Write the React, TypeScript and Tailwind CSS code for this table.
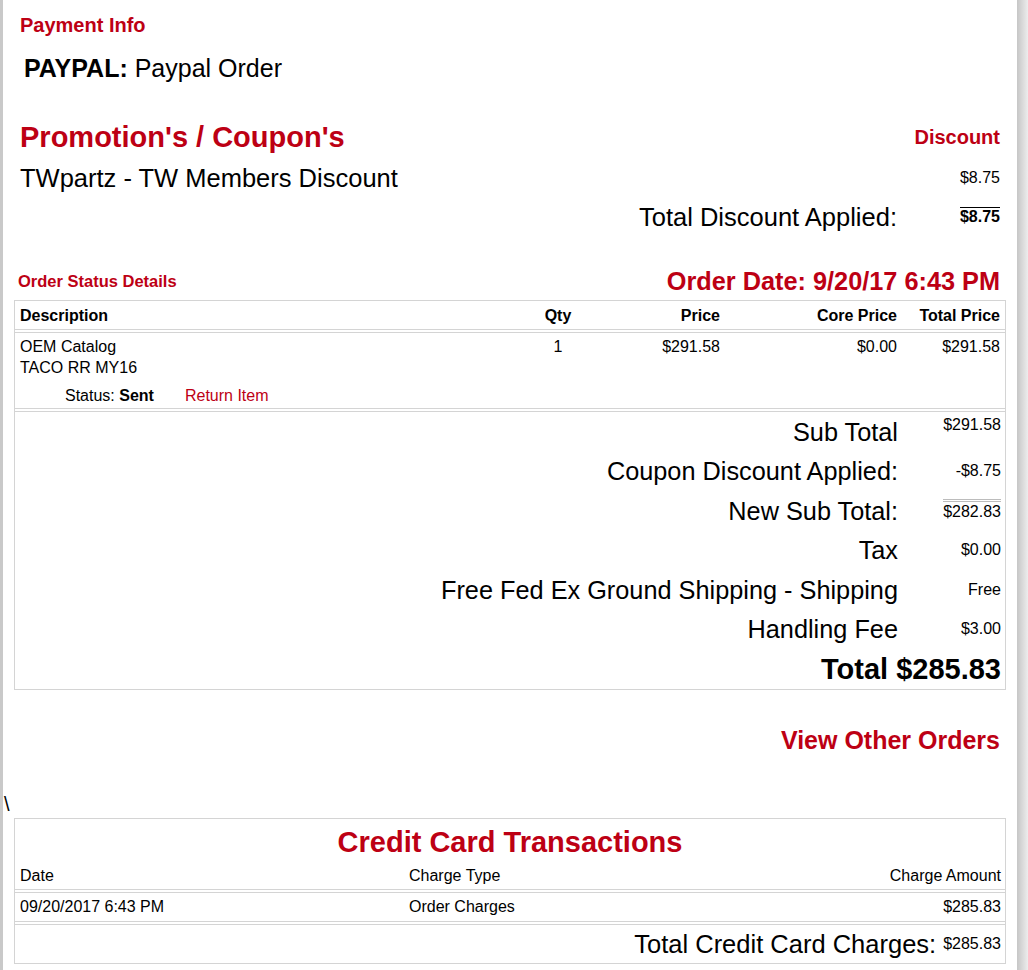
import React from 'react';

const red = 'text-[#bd0014]';

const totals: { label: string; value: string; top?: boolean; dbl?: boolean }[] = [
    { label: 'Sub Total', value: '$291.58', top: true },
    { label: 'Coupon Discount Applied:', value: '-$8.75' },
    { label: 'New Sub Total:', value: '$282.83', dbl: true },
    { label: 'Tax', value: '$0.00' },
    { label: 'Free Fed Ex Ground Shipping - Shipping', value: 'Free' },
    { label: 'Handling Fee', value: '$3.00' },
];

export default function App() {
    return (
        <div className="flex min-h-[970px] bg-white font-['Liberation_Sans',Arial,Helvetica,sans-serif] text-black">
            <div className="w-[3px] shrink-0 bg-[#c9c9c9]" />
            <main className="w-[1014px] shrink-0">
                {/* payment */}
                <div className={`pl-[17px] pt-[13px] text-[20px] leading-[24px] font-bold ${red}`}>Payment Info</div>
                <div className="mt-[16px] pl-[21px] text-[25px] leading-[30px]">
                    <span className="font-bold">PAYPAL:</span> Paypal Order
                </div>

                {/* promotions */}
                <div className="mt-[37px] flex items-center justify-between px-[17px] h-[34px]">
                    <div className={`text-[29px] leading-[34px] font-bold ${red}`}>Promotion's / Coupon's</div>
                    <div className={`text-[20px] leading-[24px] font-bold ${red}`}>Discount</div>
                </div>
                <div className="mt-[9px] flex items-center justify-between px-[17px] h-[30px]">
                    <div className="text-[25.5px] leading-[30px]">TWpartz - TW Members Discount</div>
                    <div className="text-[16px] leading-[20px]">$8.75</div>
                </div>
                <div className="mt-[9px] grid grid-cols-[1fr_103px] items-center px-[17px] h-[30px]">
                    <div className="text-right text-[25.5px] leading-[30px]">Total Discount Applied:</div>
                    <div className="text-right">
                        <span className="inline-block border-t border-black text-[16px] leading-[18px] font-bold">$8.75</span>
                    </div>
                </div>

                {/* order status */}
                <div className="mt-[34px] flex items-center justify-between pl-[15px] pr-[17px] h-[30px]">
                    <div className={`text-[16.5px] leading-[20px] font-bold ${red}`}>Order Status Details</div>
                    <div className={`text-[25.3px] leading-[30px] font-bold ${red}`}>Order Date: 9/20/17 6:43 PM</div>
                </div>

                <div className="mx-[11px] mt-[4px] border border-[#d4d4d4]">
                    <div className="flex h-[29px] items-center border-b border-[#d4d4d4] pl-[5px] pr-[4px] pt-[1px] text-[16px] leading-[20px] font-bold">
                        <div className="w-[500px]">Description</div>
                        <div className="w-[76px] text-center">Qty</div>
                        <div className="w-[124px] text-right">Price</div>
                        <div className="w-[177px] text-right">Core Price</div>
                        <div className="w-[103px] text-right">Total Price</div>
                    </div>
                    <div className="mt-[2px] border-y border-[#d4d4d4] pl-[5px] pr-[4px] pt-[3px] pb-[2px] text-[16px] leading-[21px]">
                        <div className="flex">
                            <div className="w-[500px]">
                                <div>OEM Catalog</div>
                                <div>TACO RR MY16</div>
                            </div>
                            <div className="w-[76px] text-center">1</div>
                            <div className="w-[124px] text-right">$291.58</div>
                            <div className="w-[177px] text-right">$0.00</div>
                            <div className="w-[103px] text-right">$291.58</div>
                        </div>
                        <div className="mt-[7px] flex pl-[45px]">
                            <span>Status: <span className="font-bold">Sent</span></span>
                            <span className={`ml-[31px] ${red}`}>Return Item</span>
                        </div>
                    </div>
                    <div className="mt-[2px] border-t border-[#d4d4d4] pr-[4px]">
                        {totals.map((t) => (
                            <div key={t.label} className="grid h-[39.5px] grid-cols-[1fr_103px] items-center">
                                <div className="text-right text-[25.3px] leading-[30px]">{t.label}</div>
                                <div className={`text-right text-[16px] leading-[20px] ${t.top ? 'self-start pt-[3px]' : ''}`}>
                                    {t.dbl ? (
                                        <span className="inline-block border-t-[3px] border-double border-[#bcbcbc]">{t.value}</span>
                                    ) : (
                                        t.value
                                    )}
                                </div>
                            </div>
                        ))}
                        <div className="flex h-[39.5px] items-center justify-end text-[29px] leading-[34px] font-bold">
                            Total $285.83
                        </div>
                    </div>
                </div>

                <div className={`mt-[35px] pr-[17px] text-right text-[25px] leading-[30px] font-bold ${red}`}>View Other Orders</div>

                <div className="mt-[37px] pl-[1px] text-[20px] leading-[24px]">\</div>

                {/* credit card */}
                <div className="mx-[11px] mt-[2px] border border-[#d4d4d4]">
                    <div className={`pt-[6px] text-center text-[29px] leading-[34px] font-bold ${red}`}>Credit Card Transactions</div>
                    <div className="flex h-[31px] items-center border-b border-[#d4d4d4] pl-[5px] pr-[4px] pt-[4px] text-[16px] leading-[20px]">
                        <div className="w-[389px]">Date</div>
                        <div className="flex-1">Charge Type</div>
                        <div>Charge Amount</div>
                    </div>
                    <div className="mt-[2px] flex h-[30px] items-center border-y border-[#d4d4d4] pl-[5px] pr-[4px] text-[16px] leading-[20px]">
                        <div className="w-[389px]">09/20/2017 6:43 PM</div>
                        <div className="flex-1">Order Charges</div>
                        <div>$285.83</div>
                    </div>
                    <div className="mt-[2px] flex h-[39px] items-center justify-end gap-[7px] border-t border-[#d4d4d4] pr-[4px]">
                        <span className="text-[25.5px] leading-[30px]">Total Credit Card Charges:</span>
                        <span className="text-[16px] leading-[20px]">$285.83</span>
                    </div>
                </div>
            </main>
            <div className="flex-1 bg-linear-to-r from-[#c6c6c6] to-[#ededed]" />
        </div>
    );
}
